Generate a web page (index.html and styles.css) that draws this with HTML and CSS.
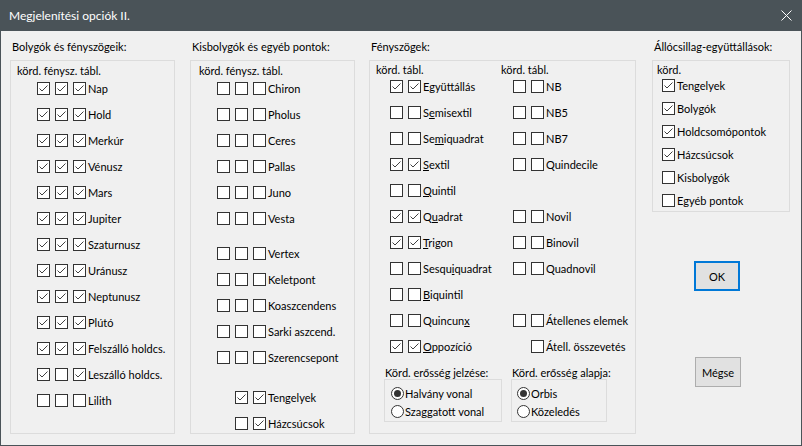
FILE: index.html
```html
<!DOCTYPE html>
<html lang="hu">
<head>
<meta charset="utf-8">
<title>Megjelenítési opciók II.</title>
<link rel="stylesheet" href="styles.css">
</head>
<body>
<div class="window">
  <div class="titlebar">
    <span class="title">Megjelenítési opciók II.</span>
    <svg class="close" viewBox="0 0 11 11"><path d="M0.5 0.5L10.5 10.5M10.5 0.5L0.5 10.5"/></svg>
  </div>
  <div class="body">

    <section class="col c1">
      <div class="glabel">Bolygók és fényszögeik:</div>
      <div class="gbox">
        <div class="hdr">körd. fénysz. tábl.</div>
        <div class="rows">
          <div class="row"><span class="cb on"><svg viewBox="0 0 11 11"><path d="M1.5 5.5L4 8L9.5 2.5"/></svg></span><span class="cb on"><svg viewBox="0 0 11 11"><path d="M1.5 5.5L4 8L9.5 2.5"/></svg></span><span class="cb on"><svg viewBox="0 0 11 11"><path d="M1.5 5.5L4 8L9.5 2.5"/></svg></span><span class="lbl">Nap</span></div>
          <div class="row"><span class="cb on"><svg viewBox="0 0 11 11"><path d="M1.5 5.5L4 8L9.5 2.5"/></svg></span><span class="cb on"><svg viewBox="0 0 11 11"><path d="M1.5 5.5L4 8L9.5 2.5"/></svg></span><span class="cb on"><svg viewBox="0 0 11 11"><path d="M1.5 5.5L4 8L9.5 2.5"/></svg></span><span class="lbl">Hold</span></div>
          <div class="row"><span class="cb on"><svg viewBox="0 0 11 11"><path d="M1.5 5.5L4 8L9.5 2.5"/></svg></span><span class="cb on"><svg viewBox="0 0 11 11"><path d="M1.5 5.5L4 8L9.5 2.5"/></svg></span><span class="cb on"><svg viewBox="0 0 11 11"><path d="M1.5 5.5L4 8L9.5 2.5"/></svg></span><span class="lbl">Merkúr</span></div>
          <div class="row"><span class="cb on"><svg viewBox="0 0 11 11"><path d="M1.5 5.5L4 8L9.5 2.5"/></svg></span><span class="cb on"><svg viewBox="0 0 11 11"><path d="M1.5 5.5L4 8L9.5 2.5"/></svg></span><span class="cb on"><svg viewBox="0 0 11 11"><path d="M1.5 5.5L4 8L9.5 2.5"/></svg></span><span class="lbl">Vénusz</span></div>
          <div class="row"><span class="cb on"><svg viewBox="0 0 11 11"><path d="M1.5 5.5L4 8L9.5 2.5"/></svg></span><span class="cb on"><svg viewBox="0 0 11 11"><path d="M1.5 5.5L4 8L9.5 2.5"/></svg></span><span class="cb on"><svg viewBox="0 0 11 11"><path d="M1.5 5.5L4 8L9.5 2.5"/></svg></span><span class="lbl">Mars</span></div>
          <div class="row"><span class="cb on"><svg viewBox="0 0 11 11"><path d="M1.5 5.5L4 8L9.5 2.5"/></svg></span><span class="cb on"><svg viewBox="0 0 11 11"><path d="M1.5 5.5L4 8L9.5 2.5"/></svg></span><span class="cb on"><svg viewBox="0 0 11 11"><path d="M1.5 5.5L4 8L9.5 2.5"/></svg></span><span class="lbl">Jupiter</span></div>
          <div class="row"><span class="cb on"><svg viewBox="0 0 11 11"><path d="M1.5 5.5L4 8L9.5 2.5"/></svg></span><span class="cb on"><svg viewBox="0 0 11 11"><path d="M1.5 5.5L4 8L9.5 2.5"/></svg></span><span class="cb on"><svg viewBox="0 0 11 11"><path d="M1.5 5.5L4 8L9.5 2.5"/></svg></span><span class="lbl">Szaturnusz</span></div>
          <div class="row"><span class="cb on"><svg viewBox="0 0 11 11"><path d="M1.5 5.5L4 8L9.5 2.5"/></svg></span><span class="cb on"><svg viewBox="0 0 11 11"><path d="M1.5 5.5L4 8L9.5 2.5"/></svg></span><span class="cb on"><svg viewBox="0 0 11 11"><path d="M1.5 5.5L4 8L9.5 2.5"/></svg></span><span class="lbl">Uránusz</span></div>
          <div class="row"><span class="cb on"><svg viewBox="0 0 11 11"><path d="M1.5 5.5L4 8L9.5 2.5"/></svg></span><span class="cb on"><svg viewBox="0 0 11 11"><path d="M1.5 5.5L4 8L9.5 2.5"/></svg></span><span class="cb on"><svg viewBox="0 0 11 11"><path d="M1.5 5.5L4 8L9.5 2.5"/></svg></span><span class="lbl">Neptunusz</span></div>
          <div class="row"><span class="cb on"><svg viewBox="0 0 11 11"><path d="M1.5 5.5L4 8L9.5 2.5"/></svg></span><span class="cb on"><svg viewBox="0 0 11 11"><path d="M1.5 5.5L4 8L9.5 2.5"/></svg></span><span class="cb on"><svg viewBox="0 0 11 11"><path d="M1.5 5.5L4 8L9.5 2.5"/></svg></span><span class="lbl">Plútó</span></div>
          <div class="row"><span class="cb on"><svg viewBox="0 0 11 11"><path d="M1.5 5.5L4 8L9.5 2.5"/></svg></span><span class="cb on"><svg viewBox="0 0 11 11"><path d="M1.5 5.5L4 8L9.5 2.5"/></svg></span><span class="cb on"><svg viewBox="0 0 11 11"><path d="M1.5 5.5L4 8L9.5 2.5"/></svg></span><span class="lbl">Felszálló holdcs.</span></div>
          <div class="row"><span class="cb on"><svg viewBox="0 0 11 11"><path d="M1.5 5.5L4 8L9.5 2.5"/></svg></span><span class="cb"></span><span class="cb on"><svg viewBox="0 0 11 11"><path d="M1.5 5.5L4 8L9.5 2.5"/></svg></span><span class="lbl">Leszálló holdcs.</span></div>
          <div class="row"><span class="cb"></span><span class="cb"></span><span class="cb"></span><span class="lbl">Lilith</span></div>
        </div>
      </div>
    </section>

    <section class="col c2">
      <div class="glabel">Kisbolygók és egyéb pontok:</div>
      <div class="gbox">
        <div class="hdr">körd. fénysz. tábl.</div>
        <div class="rows">
          <div class="row"><span class="cb"></span><span class="cb"></span><span class="cb"></span><span class="lbl">Chiron</span></div>
          <div class="row"><span class="cb"></span><span class="cb"></span><span class="cb"></span><span class="lbl">Pholus</span></div>
          <div class="row"><span class="cb"></span><span class="cb"></span><span class="cb"></span><span class="lbl">Ceres</span></div>
          <div class="row"><span class="cb"></span><span class="cb"></span><span class="cb"></span><span class="lbl">Pallas</span></div>
          <div class="row"><span class="cb"></span><span class="cb"></span><span class="cb"></span><span class="lbl">Juno</span></div>
          <div class="row"><span class="cb"></span><span class="cb"></span><span class="cb"></span><span class="lbl">Vesta</span></div>
          <div class="row sp1"><span class="cb"></span><span class="cb"></span><span class="cb"></span><span class="lbl">Vertex</span></div>
          <div class="row"><span class="cb"></span><span class="cb"></span><span class="cb"></span><span class="lbl">Keletpont</span></div>
          <div class="row"><span class="cb"></span><span class="cb"></span><span class="cb"></span><span class="lbl">Koaszcendens</span></div>
          <div class="row"><span class="cb"></span><span class="cb"></span><span class="cb"></span><span class="lbl">Sarki aszcend.</span></div>
          <div class="row"><span class="cb"></span><span class="cb"></span><span class="cb"></span><span class="lbl">Szerencsepont</span></div>
          <div class="row sp2"><span class="ph"></span><span class="cb on"><svg viewBox="0 0 11 11"><path d="M1.5 5.5L4 8L9.5 2.5"/></svg></span><span class="cb on"><svg viewBox="0 0 11 11"><path d="M1.5 5.5L4 8L9.5 2.5"/></svg></span><span class="lbl">Tengelyek</span></div>
          <div class="row"><span class="ph"></span><span class="cb"></span><span class="cb on"><svg viewBox="0 0 11 11"><path d="M1.5 5.5L4 8L9.5 2.5"/></svg></span><span class="lbl">Házcsúcsok</span></div>
        </div>
      </div>
    </section>

    <section class="col c3">
      <div class="glabel">Fényszögek:</div>
      <div class="gbox">
        <div class="hdr"><span class="h1">körd. tábl.</span><span>körd. tábl.</span></div>
        <div class="agrid">
          <div class="row"><span class="cb on"><svg viewBox="0 0 11 11"><path d="M1.5 5.5L4 8L9.5 2.5"/></svg></span><span class="cb on"><svg viewBox="0 0 11 11"><path d="M1.5 5.5L4 8L9.5 2.5"/></svg></span><span class="lbl">E<u>g</u>yüttállás</span></div>
          <div class="row"><span class="cb"></span><span class="cb"></span><span class="lbl">NB</span></div>

          <div class="row"><span class="cb"></span><span class="cb"></span><span class="lbl">S<u>e</u>misextil</span></div>
          <div class="row"><span class="cb"></span><span class="cb"></span><span class="lbl">NB5</span></div>

          <div class="row"><span class="cb"></span><span class="cb"></span><span class="lbl">Se<u>m</u>iquadrat</span></div>
          <div class="row"><span class="cb"></span><span class="cb"></span><span class="lbl">NB7</span></div>

          <div class="row"><span class="cb on"><svg viewBox="0 0 11 11"><path d="M1.5 5.5L4 8L9.5 2.5"/></svg></span><span class="cb on"><svg viewBox="0 0 11 11"><path d="M1.5 5.5L4 8L9.5 2.5"/></svg></span><span class="lbl"><u>S</u>extil</span></div>
          <div class="row"><span class="cb"></span><span class="cb"></span><span class="lbl">Quindecile</span></div>

          <div class="row"><span class="cb"></span><span class="cb"></span><span class="lbl"><u>Q</u>uintil</span></div>
          <div class="row"></div>

          <div class="row"><span class="cb on"><svg viewBox="0 0 11 11"><path d="M1.5 5.5L4 8L9.5 2.5"/></svg></span><span class="cb on"><svg viewBox="0 0 11 11"><path d="M1.5 5.5L4 8L9.5 2.5"/></svg></span><span class="lbl">Q<u>u</u>adrat</span></div>
          <div class="row"><span class="cb"></span><span class="cb"></span><span class="lbl">Novil</span></div>

          <div class="row"><span class="cb on"><svg viewBox="0 0 11 11"><path d="M1.5 5.5L4 8L9.5 2.5"/></svg></span><span class="cb on"><svg viewBox="0 0 11 11"><path d="M1.5 5.5L4 8L9.5 2.5"/></svg></span><span class="lbl"><u>T</u>rigon</span></div>
          <div class="row"><span class="cb"></span><span class="cb"></span><span class="lbl">Binovil</span></div>

          <div class="row"><span class="cb"></span><span class="cb"></span><span class="lbl">Sesqu<u>i</u>quadrat</span></div>
          <div class="row"><span class="cb"></span><span class="cb"></span><span class="lbl">Quadnovil</span></div>

          <div class="row"><span class="cb"></span><span class="cb"></span><span class="lbl"><u>B</u>iquintil</span></div>
          <div class="row"></div>

          <div class="row"><span class="cb"></span><span class="cb"></span><span class="lbl">Quincun<u>x</u></span></div>
          <div class="row"><span class="cb"></span><span class="cb"></span><span class="lbl">Átellenes elemek</span></div>

          <div class="row"><span class="cb on"><svg viewBox="0 0 11 11"><path d="M1.5 5.5L4 8L9.5 2.5"/></svg></span><span class="cb on"><svg viewBox="0 0 11 11"><path d="M1.5 5.5L4 8L9.5 2.5"/></svg></span><span class="lbl"><u>O</u>ppozíció</span></div>
          <div class="row"><span class="ph"></span><span class="cb"></span><span class="lbl">Átell. összevetés</span></div>
        </div>

        <div class="subgroups">
          <div class="sub s1">
            <div class="slabel">Körd. erősség jelzése:</div>
            <div class="sbox">
              <div class="row"><span class="rb on"></span><span class="lbl">Halvány vonal</span></div>
              <div class="row"><span class="rb"></span><span class="lbl">Szaggatott vonal</span></div>
            </div>
          </div>
          <div class="sub s2">
            <div class="slabel">Körd. erősség alapja:</div>
            <div class="sbox">
              <div class="row"><span class="rb on"></span><span class="lbl">Orbis</span></div>
              <div class="row"><span class="rb"></span><span class="lbl">Közeledés</span></div>
            </div>
          </div>
        </div>
      </div>
    </section>

    <section class="col c4">
      <div class="glabel">Állócsillag-együttállások:</div>
      <div class="gbox">
        <div class="hdr">körd.</div>
        <div class="rows">
          <div class="row"><span class="cb on"><svg viewBox="0 0 11 11"><path d="M1.5 5.5L4 8L9.5 2.5"/></svg></span><span class="lbl">Tengelyek</span></div>
          <div class="row"><span class="cb on"><svg viewBox="0 0 11 11"><path d="M1.5 5.5L4 8L9.5 2.5"/></svg></span><span class="lbl">Bolygók</span></div>
          <div class="row"><span class="cb on"><svg viewBox="0 0 11 11"><path d="M1.5 5.5L4 8L9.5 2.5"/></svg></span><span class="lbl">Holdcsomópontok</span></div>
          <div class="row"><span class="cb on"><svg viewBox="0 0 11 11"><path d="M1.5 5.5L4 8L9.5 2.5"/></svg></span><span class="lbl">Házcsúcsok</span></div>
          <div class="row"><span class="cb"></span><span class="lbl">Kisbolygók</span></div>
          <div class="row"><span class="cb"></span><span class="lbl">Egyéb pontok</span></div>
        </div>
      </div>
      <button class="btn ok" type="button">OK</button>
      <button class="btn cancel" type="button">Mégse</button>
    </section>

  </div>
</div>
</body>
</html>
```
FILE: styles.css
```css
* { box-sizing: border-box; }

html, body {
  margin: 0;
  padding: 0;
}

body {
  width: 802px;
  height: 446px;
  overflow: hidden;
  font-family: "Lato", "Noto Sans", sans-serif;
  font-size: 11px;
  color: #000;
  background: #f0f0f0;
}

.window {
  width: 802px;
  height: 446px;
  border: 1px solid #4a5358;
  border-top: 0;
  display: flex;
  flex-direction: column;
  background: #f0f0f0;
}

.titlebar {
  height: 31px;
  flex: none;
  margin: 0 -1px;
  padding: 0 10px 0 9px;
  background: #4a5358;
  color: #fff;
  display: flex;
  align-items: center;
}

.title {
  font-size: 12px;
  line-height: 16px;
}

.close {
  margin-left: auto;
  width: 11px;
  height: 11px;
  fill: none;
  stroke: #fff;
  stroke-width: 1;
}

.body {
  flex: 1;
  display: flex;
  align-items: flex-start;
  padding: 8px 0 0 9px;
}

.col {
  display: flex;
  flex-direction: column;
  flex: none;
}

.c1 { width: 165px; margin-right: 15px; }
.c2 { width: 165px; margin-right: 14px; }
.c3 { width: 267px; margin-right: 16px; }
.c4 { width: 138px; }

.glabel {
  height: 16px;
  line-height: 16px;
  padding-left: 2px;
  margin-bottom: 5px;
  white-space: nowrap;
}

.gbox {
  border: 1px solid #dcdcdc;
  height: 374px;
}

.c4 .gbox { height: 152px; }

.hdr {
  height: 16px;
  line-height: 16px;
  white-space: nowrap;
  display: flex;
}

.c1 .hdr { margin: 2px 0 3px 6px; }
.c2 .hdr { margin: 2px 0 3px 8px; }
.c3 .hdr { margin: 1px 0 2px 6px; }
.c4 .hdr { margin: 1px 0 1px 4px; }

.hdr .h1 { width: 125px; }

.rows {
  display: flex;
  flex-direction: column;
  gap: 13px;
  padding-left: 26px;
}

.c4 .rows {
  gap: 10px;
  padding-left: 9px;
}

.row {
  display: flex;
  align-items: center;
  height: 13px;
  line-height: 13px;
  white-space: nowrap;
}

.row > * + * { margin-left: 5px; }
.row > .lbl { margin-left: 2px; }

.sp1 { margin-top: 9px; }
.sp2 { margin-top: 14px; }

.cb, .ph {
  display: block;
  flex: none;
  width: 13px;
  height: 13px;
}

.cb {
  border: 1px solid #333;
  background: #fff;
}

.cb svg {
  display: block;
  width: 11px;
  height: 11px;
  fill: none;
  stroke: #404040;
  stroke-width: 1;
}

u { text-decoration-thickness: 1px; text-underline-offset: 1px; }

.agrid {
  display: grid;
  grid-template-columns: 123px auto;
  row-gap: 13px;
  padding-left: 20px;
}

.subgroups {
  display: flex;
  margin: 12px 0 0 14px;
}

.s1 { width: 118px; margin-right: 9px; }
.s2 { width: 96px; }

.slabel {
  height: 14px;
  line-height: 16px;
  padding-left: 1px;
  white-space: nowrap;
}

.sbox {
  border: 1px solid #dcdcdc;
  height: 43px;
  padding: 7px 0 0 6px;
  display: flex;
  flex-direction: column;
  gap: 5px;
}

.s2 .sbox { padding-left: 5px; }

.rb {
  display: flex;
  align-items: center;
  justify-content: center;
  flex: none;
  width: 13px;
  height: 13px;
  border: 1px solid #333;
  border-radius: 50%;
  background: #fff;
}

.rb.on::after {
  content: "";
  width: 7px;
  height: 7px;
  border-radius: 50%;
  background: #333;
}

.rb + .lbl { margin-left: 1px; }

.btn {
  font-family: "Lato", "Noto Sans", sans-serif;
  font-size: 11px;
  color: #000;
  background: #e1e1e1;
  width: 46px;
  height: 30px;
  padding: 0;
  margin: 0;
}

.ok {
  border: 2px solid #0078d7;
  margin: 49px 0 0 42px;
}

.cancel {
  border: 1px solid #adadad;
  margin: 66px 0 0 43px;
}
```
